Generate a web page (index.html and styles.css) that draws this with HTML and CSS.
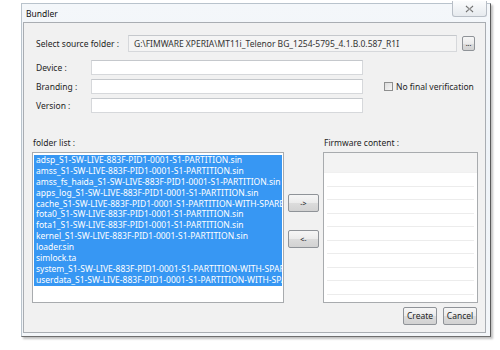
FILE: index.html
```html
<!DOCTYPE html>
<html>
<head>
<meta charset="utf-8">
<link rel="stylesheet" href="styles.css">
</head>
<body>
<div class="window">
  <div class="titlebar"><span class="title">Bundler</span></div>
  <button class="close" aria-label="Close">
    <svg width="9" height="8" viewBox="0 0 9 8"><path d="M1 1 L8 7 M8 1 L1 7" stroke="#6a6a6a" stroke-width="1.2" fill="none"/><path d="M2 1 L7 7 M7 1 L2 7" stroke="#d0d0d0" stroke-width="0.6" fill="none"/></svg>
  </button>
  <div class="client">
    <div class="source-row">
      <span class="label src-label">Select source folder :</span>
      <div class="field src-field">G:\FIMWARE XPERIA\MT11i_Telenor BG_1254-5795_4.1.B.0.587_R1I</div>
      <button class="btn dots">...</button>
    </div>
    <div class="info">
      <div class="info-fields">
        <div class="info-row"><span class="label info-label">Device :</span><div class="field info-field"></div></div>
        <div class="info-row"><span class="label info-label">Branding :</span><div class="field info-field"></div></div>
        <div class="info-row"><span class="label info-label">Version :</span><div class="field info-field"></div></div>
      </div>
      <label class="check"><span class="box"></span><span class="label">No final verification</span></label>
    </div>
    <div class="lists">
      <div class="col left">
        <div class="label col-label">folder list :</div>
        <div class="listbox folder">
          <div class="item">adsp_S1-SW-LIVE-883F-PID1-0001-S1-PARTITION.sin</div>
          <div class="item">amss_S1-SW-LIVE-883F-PID1-0001-S1-PARTITION.sin</div>
          <div class="item">amss_fs_haida_S1-SW-LIVE-883F-PID1-0001-S1-PARTITION.sin</div>
          <div class="item">apps_log_S1-SW-LIVE-883F-PID1-0001-S1-PARTITION.sin</div>
          <div class="item">cache_S1-SW-LIVE-883F-PID1-0001-S1-PARTITION-WITH-SPARE.sin</div>
          <div class="item">fota0_S1-SW-LIVE-883F-PID1-0001-S1-PARTITION.sin</div>
          <div class="item">fota1_S1-SW-LIVE-883F-PID1-0001-S1-PARTITION.sin</div>
          <div class="item">kernel_S1-SW-LIVE-883F-PID1-0001-S1-PARTITION.sin</div>
          <div class="item">loader.sin</div>
          <div class="item">simlock.ta</div>
          <div class="item">system_S1-SW-LIVE-883F-PID1-0001-S1-PARTITION-WITH-SPARE.sin</div>
          <div class="item">userdata_S1-SW-LIVE-883F-PID1-0001-S1-PARTITION-WITH-SPARE.sin</div>
        </div>
      </div>
      <div class="mid">
        <button class="btn move">-&gt;</button>
        <button class="btn move">&lt;-</button>
      </div>
      <div class="col right">
        <div class="label col-label">Firmware content :</div>
        <div class="listbox firmware">
          <div class="frow head"></div>
          <div class="frow"></div>
          <div class="frow"></div>
          <div class="frow"></div>
          <div class="frow"></div>
          <div class="frow"></div>
          <div class="frow"></div>
          <div class="frow"></div>
          <div class="frow"></div>
          <div class="frow"></div>
        </div>
      </div>
    </div>
    <div class="actions">
      <button class="btn action">Create</button>
      <button class="btn action">Cancel</button>
    </div>
  </div>
</div>
</body>
</html>
```
FILE: styles.css
```css
* { box-sizing: border-box; }
html, body { margin: 0; padding: 0; background: #ffffff; }
body {
  font-family: "Noto Sans", "Open Sans", sans-serif;
  font-size: 8.5px;
  color: #1e1e1e;
  width: 500px;
  height: 350px;
  overflow: hidden;
}
.window {
  position: relative;
  margin: 3px 0 0 21px;
  width: 470px;
  height: 334px;
  border: 1px solid #b9c3cc;
  border-bottom-color: #6e6e6e;
  border-right-color: #5a5a5a;
  background: linear-gradient(180deg, #f4f7fa 0%, #eef3f8 40%, #f3f6f9 100%);
  padding: 0 4px 0 1px;
  box-shadow: 2px 2px 2px rgba(0,0,0,0.25);
}
.titlebar {
  height: 18px;
  display: flex;
  align-items: center;
  padding-left: 3px;
}
.title { font-size: 8.5px; color: #111; }
.close {
  position: absolute;
  top: -3px;
  right: 3px;
  width: 35px;
  height: 16px;
  border: 1px solid #b8bec6;
  border-top: none;
  border-radius: 0 0 3px 3px;
  background: linear-gradient(180deg, #fbfcfd, #e6eaee);
  padding: 0;
  display: flex;
  align-items: center;
  justify-content: center;
}
.client {
  width: 463px;
  height: 311px;
  border: 1px solid #a9adb2;
  background: #f1f1f1;
  padding: 12px 0 0 0;
}
.label { white-space: nowrap; color: #1e1e1e; }
.field {
  background: #fff;
  border: 1px solid #d6d8db;
  border-top-color: #c5c8cc;
}
.source-row {
  display: flex;
  align-items: center;
  height: 17px;
}
.src-label { width: 104px; padding-left: 12px; }
.src-field {
  width: 329px;
  height: 17px;
  line-height: 15px;
  padding-left: 5px;
  font-size: 8.5px;
  color: #333;
  background: #f4f4f4;
  white-space: nowrap;
  overflow: hidden;
}
.btn {
  font-family: inherit;
  font-size: 8.5px;
  color: #1e1e1e;
  border: 1px solid #8f9398;
  border-radius: 2px;
  background: linear-gradient(180deg, #f6f6f6 0%, #ebebeb 50%, #dcdcdc 51%, #d2d2d2 100%);
  padding: 0;
  line-height: 1;
}
.dots { width: 13px; height: 15px; margin-left: 5px; font-size: 7px; }
.info {
  display: flex;
  align-items: center;
  margin-top: 8px;
}
.info-fields { display: flex; flex-direction: column; gap: 4px; }
.info-row { display: flex; align-items: center; height: 15px; }
.info-label { width: 67px; padding-left: 12px; }
.info-field { width: 272px; height: 15px; }
.check {
  display: flex;
  align-items: center;
  margin-left: 21px;
  gap: 3px;
}
.box {
  width: 9px;
  height: 9px;
  border: 1px solid #8e8f8f;
  background: linear-gradient(135deg, #dcdcdc, #f6f6f6);
}
.lists {
  display: flex;
  margin-top: 24px;
  padding-left: 8px;
}
.col-label { height: 11px; line-height: 11px; padding-left: 1px; }
.listbox {
  margin-top: 4px;
  height: 151px;
  border: 1px solid #a8abae;
  background: #fff;
  overflow: hidden;
}
.folder { width: 252px; padding: 2px 1px; }
.item {
  height: 10.9px;
  line-height: 10.9px;
  background: #3797f3;
  color: #fff;
  white-space: nowrap;
  overflow: hidden;
  padding-left: 2px;
  font-size: 8.5px;
}
.mid {
  width: 39px;
  display: flex;
  flex-direction: column;
  align-items: center;
  padding-top: 57px;
  gap: 18px;
}
.move { width: 31px; height: 18px; font-size: 7px; }
.firmware { width: 155px; }
.frow { height: 13.5px; border-bottom: 1px solid #ececec; margin: 0 3px; }
.frow.head { height: 20px; background: #f3f3f3; border-bottom: 1px solid #f0f0f0; margin: 0; }
.actions {
  display: flex;
  justify-content: flex-end;
  gap: 6px;
  margin-top: 4px;
  padding-right: 8px;
}
.action { width: 34px; height: 18px; font-size: 8.5px; }
```
